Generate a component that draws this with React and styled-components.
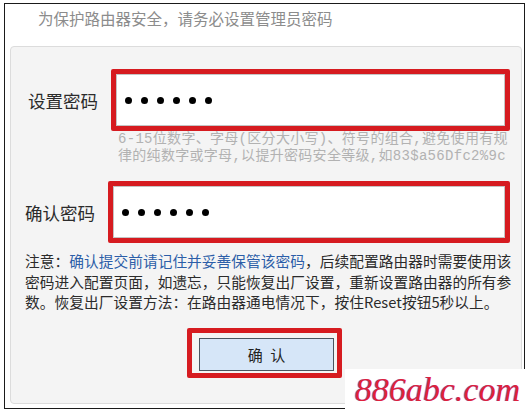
import React from 'react';
import styled, {createGlobalStyle} from 'styled-components';

const GlobalStyle = createGlobalStyle`
    body {
        margin: 0;
        background: #fff;
        font-family: "Noto Sans CJK SC", "DejaVu Sans", sans-serif;
    }
`
let Page = styled.div`
    position: relative;
    width: 529px;
    height: 410px;
    overflow: hidden;
`
let Frame = styled.div`
    margin: 3px 0 0 4px;
    width: 521px;
    height: 406px;
    box-sizing: border-box;
    border: 1px solid #1a1a1a;
    padding: 0 2px 4px 5px;
    display: flex;
    flex-direction: column;
`
let Header = styled.div`
    height: 42px;
    box-sizing: border-box;
    padding: 4px 0 0 28px;
    font-size: 15.5px;
    line-height: 20px;
    color: #8c8c8c;
`
let Panel = styled.div`
    flex: 1;
    background: #f4f4f4;
    border: 1px solid #dcdcdc;
    border-radius: 4px;
    display: flex;
    flex-direction: column;
`
let Row = styled.div`
    display: flex;
    align-items: center;
    margin-top: ${p => p.$top}px;
`
let Label = styled.div`
    width: ${p => p.$w}px;
    padding-left: ${p => p.$pad}px;
    box-sizing: border-box;
    font-size: 17.5px;
    color: #2b2b2b;
`
let Highlight = styled.div`
    box-sizing: border-box;
    width: ${p => p.$w}px;
    height: ${p => p.$h}px;
    border: 5px solid #d61b20;
    border-radius: 2px;
    display: flex;
`
let Field = styled.div`
    flex: 1;
    background: #fff;
    border: 1px solid #c4c4c4;
    display: flex;
    align-items: center;
    gap: 9px;
    padding-left: 8px;
`
let Dot = styled.span`
    width: 7px;
    height: 7px;
    border-radius: 50%;
    background: #000;
`
let Hint = styled.div`
    padding-left: 107px;
    font-family: "Liberation Mono", "Noto Sans CJK SC", monospace;
    font-size: 14px;
    line-height: 17px;
    color: #b2b2b2;
    letter-spacing: 0.3px;
    white-space: nowrap;
`
let Note = styled.div`
    margin-top: 8px;
    padding-left: 14px;
    font-size: 14.7px;
    line-height: 20.5px;
    color: #2b2b2b;
    letter-spacing: 0.05px;
    white-space: nowrap;
`
let Link = styled.span`
    color: #2c5ea8;
`
let ButtonFrame = styled(Highlight)`
    margin: 15px 0 0 176px;
    padding: 5px 3px 2px 7px;
`
let Button = styled.button`
    width: 135px;
    height: 33px;
    background: #d6e6f8;
    border: 1px solid #4a5560;
    font-family: "Noto Sans CJK SC", sans-serif;
    font-size: 15px;
    color: #222;
    padding: 0;
    word-spacing: 4px;
`
let Watermark = styled.div`
    position: absolute;
    left: 345px;
    top: 369px;
    width: 184px;
    height: 41px;
    background: #fff;
    font-family: "Liberation Serif", serif;
    font-style: italic;
    font-size: 34px;
    line-height: 41px;
    padding-left: 10px;
    box-sizing: border-box;
    color: #e0203a;
    text-shadow: -1px 0 rgba(70, 60, 200, 0.6);
`

function Password({width}) {
    return (
        <Highlight $w={width} $h={62}>
            <Field>
                {[0, 1, 2, 3, 4, 5].map(i => <Dot key={i}/>)}
            </Field>
        </Highlight>
    )
}

export default function App() {
    return (
        <Page>
            <GlobalStyle/>
            <Frame>
                <Header>为保护路由器安全，请务必设置管理员密码</Header>
                <Panel>
                    <Row $top={22}>
                        <Label $w={100} $pad={17}>设置密码</Label>
                        <Password width={399}/>
                    </Row>
                    <Hint>
                        6-15位数字、字母(区分大小写)、符号的组合,避免使用有规<br/>
                        律的纯数字或字母,以提升密码安全等级,如83$a56Dfc2%9c
                    </Hint>
                    <Row $top={16}>
                        <Label $w={97} $pad={14}>确认密码</Label>
                        <Password width={402}/>
                    </Row>
                    <Note>
                        注意：<Link>确认提交前请记住并妥善保管该密码</Link>，后续配置路由器时需要使用该<br/>
                        密码进入配置页面，如遗忘，只能恢复出厂设置，重新设置路由器的所有参<br/>
                        数。恢复出厂设置方法：在路由器通电情况下，按住Reset按钮5秒以上。
                    </Note>
                    <ButtonFrame $w={155} $h={50}>
                        <Button>确 认</Button>
                    </ButtonFrame>
                </Panel>
            </Frame>
            <Watermark>886abc.com</Watermark>
        </Page>
    )
}
